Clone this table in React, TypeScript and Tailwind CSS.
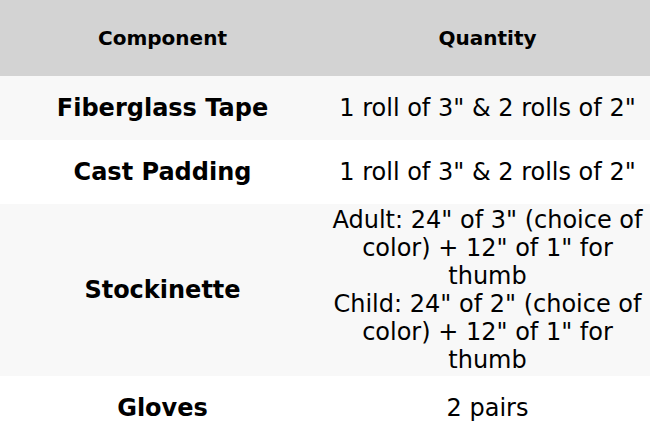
const rows = [
  { name: "Fiberglass Tape", qty: ['1 roll of 3" & 2 rolls of 2"'] },
  { name: "Cast Padding", qty: ['1 roll of 3" & 2 rolls of 2"'] },
  {
    name: "Stockinette",
    qty: [
      'Adult: 24" of 3" (choice of color) + 12" of 1" for thumb',
      'Child: 24" of 2" (choice of color) + 12" of 1" for thumb',
    ],
  },
  { name: "Gloves", qty: ["2 pairs"] },
];

export default function App() {
  return (
    <div className="w-[650px] h-[440px] overflow-hidden bg-white font-['DejaVu_Sans',sans-serif] text-black">
      <table className="w-full table-fixed border-collapse">
        <thead>
          <tr className="bg-[#d3d3d3] h-[76px]">
            <th className="w-1/2 text-[20px] leading-[23px] font-bold text-center align-middle">
              Component
            </th>
            <th className="w-1/2 text-[20px] leading-[23px] font-bold text-center align-middle">
              Quantity
            </th>
          </tr>
        </thead>
        <tbody>
          {rows.map((row, i) => (
            <tr key={row.name} className={i % 2 === 0 ? "bg-[#f8f8f8]" : "bg-white"}>
              <td className="py-[18px] px-[6px] text-[24px] leading-[28px] font-bold text-center align-middle">
                {row.name}
              </td>
              <td className="py-[2px] px-[6px] text-[24px] leading-[28px] text-center align-middle">
                {row.qty.map((line) => (
                  <div key={line}>{line}</div>
                ))}
              </td>
            </tr>
          ))}
        </tbody>
      </table>
    </div>
  );
}
